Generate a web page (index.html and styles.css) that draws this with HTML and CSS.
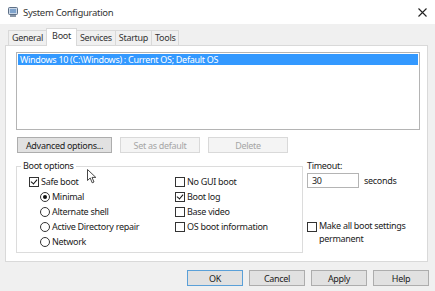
FILE: index.html
```html
<!DOCTYPE html>
<html lang="en">
<head>
    <meta charset="UTF-8">
    <title>System Configuration</title>
    <link rel="stylesheet" href="styles.css">
</head>
<body>
    <div class="window">
        <div class="titlebar">
            <svg class="app-icon" width="10" height="11" viewBox="0 0 10 11">
                <rect x="0.5" y="0.5" width="9" height="7" rx="1" fill="#c9d6e6" stroke="#5d6f86"/>
                <rect x="2" y="2" width="6" height="4" fill="#7fa3cc"/>
                <rect x="2" y="8" width="6" height="2" fill="#8a96a6"/>
            </svg>
            <span class="title">System Configuration</span>
            <svg class="close" width="9" height="9" viewBox="0 0 9 9">
                <path d="M0.5 0.5 L8.5 8.5 M8.5 0.5 L0.5 8.5" stroke="#222" stroke-width="1.1"/>
            </svg>
        </div>

        <div class="tabs">
            <div class="tab">General</div>
            <div class="tab active">Boot</div>
            <div class="tab">Services</div>
            <div class="tab">Startup</div>
            <div class="tab">Tools</div>
        </div>

        <div class="panel">
            <div class="listbox">
                <div class="list-item selected">Windows 10 (C:\Windows) : Current OS; Default OS</div>
            </div>

            <div class="btn-row">
                <button class="btn btn-advanced">Advanced options...</button>
                <button class="btn btn-wide" disabled>Set as default</button>
                <button class="btn btn-wide" disabled>Delete</button>
            </div>

            <div class="options">
                <fieldset class="group">
                    <legend>Boot options</legend>
                    <div class="group-body">
                        <div class="col col-left">
                            <div class="row"><span class="check checked"></span>Safe boot</div>
                            <div class="row sub"><span class="radio selected"></span>Minimal</div>
                            <div class="row sub"><span class="radio"></span>Alternate shell</div>
                            <div class="row sub"><span class="radio"></span>Active Directory repair</div>
                            <div class="row sub"><span class="radio"></span>Network</div>
                        </div>
                        <div class="col">
                            <div class="row"><span class="check"></span>No GUI boot</div>
                            <div class="row"><span class="check checked"></span>Boot log</div>
                            <div class="row"><span class="check"></span>Base video</div>
                            <div class="row"><span class="check"></span>OS boot information</div>
                        </div>
                    </div>
                </fieldset>

                <div class="side">
                    <div class="timeout-label">Timeout:</div>
                    <div class="timeout">
                        <div class="textbox">30</div>
                        <span>seconds</span>
                    </div>
                    <div class="permanent">
                        <span class="check"></span>
                        <div class="permanent-text">
                            <div>Make all boot settings</div>
                            <div>permanent</div>
                        </div>
                    </div>
                </div>
            </div>

            <svg class="cursor" width="11" height="15" viewBox="0 0 11 15">
                <path d="M0.5 0.5 L0.5 11.5 L3.2 9 L5.2 13.8 L7 13 L5 8.4 L8.8 8.4 Z" fill="#fff" stroke="#333" stroke-width="0.9" stroke-linejoin="round"/>
            </svg>
        </div>

        <div class="footer">
            <button class="btn btn-foot default">OK</button>
            <button class="btn btn-foot">Cancel</button>
            <button class="btn btn-foot">Apply</button>
            <button class="btn btn-foot">Help</button>
        </div>
    </div>
</body>
</html>
```

FILE: styles.css
```css
body {
    margin: 0;
    padding: 0;
    background-color: #f0f0f0;
    font-family: "Noto Sans", "Open Sans", sans-serif;
    font-size: 9px;
    letter-spacing: -0.3px;
    color: #222;
}

.window {
    width: 435px;
    height: 291px;
    display: flex;
    flex-direction: column;
    overflow: hidden;
}

.titlebar {
    height: 24px;
    background: white;
    display: flex;
    align-items: center;
    padding: 0 8px;
    flex-shrink: 0;
}

.title {
    margin-left: 5px;
    font-size: 9.5px;
    letter-spacing: -0.3px;
    color: #333;
}

.close {
    margin-left: auto;
}

.tabs {
    display: flex;
    align-items: flex-end;
    height: 21px;
    padding-left: 8px;
    position: relative;
    z-index: 1;
}

.tab {
    height: 15px;
    line-height: 14px;
    padding: 0 3px;
    box-sizing: border-box;
    border: 1px solid #d9d9d9;
    border-bottom: none;
    background: #f0f0f0;
    margin-right: -1px;
    color: #333;
}

.tab.active {
    height: 18px;
    margin-bottom: -1px;
    padding: 0 5px;
    line-height: 13px;
    background: white;
    position: relative;
}

.panel {
    position: relative;
    height: 217px;
    box-sizing: border-box;
    margin: 0 7px 0 5px;
    border: 1px solid #d9d9d9;
    background: white;
    padding: 6px 7px 0 10px;
}

.listbox {
    height: 78px;
    box-sizing: border-box;
    border: 1px solid #b4b4b4;
    padding: 1px;
}

.list-item {
    height: 11px;
    line-height: 11px;
    padding-left: 2px;
    color: white;
}

.list-item.selected {
    background: #3399ff;
}

.btn-row {
    display: flex;
    gap: 8px;
    margin-top: 7px;
    padding-left: 1px;
}

.btn {
    height: 16px;
    box-sizing: border-box;
    padding: 0;
    border: 1px solid #adadad;
    background: #e1e1e1;
    font-family: inherit;
    font-size: 9px;
    letter-spacing: inherit;
    color: #222;
}

.btn:disabled {
    border-color: #d9d9d9;
    background: #f4f4f4;
    color: #a6a6a6;
}

.btn-advanced {
    width: 95px;
}

.btn-wide {
    width: 80px;
}

.options {
    display: flex;
    margin-top: 7px;
}

.group {
    width: 287px;
    height: 93px;
    box-sizing: border-box;
    margin: 0;
    padding: 0;
    border: 1px solid #dcdcdc;
}

.group legend {
    margin-left: 4px;
    padding: 0 2px;
    line-height: 12px;
}

.group-body {
    display: flex;
    padding: 2px 0 0 12px;
}

.col-left {
    width: 146px;
}

.row {
    height: 15px;
    display: flex;
    align-items: center;
    white-space: nowrap;
}

.row.sub {
    padding-left: 11px;
}

.check {
    width: 10px;
    height: 10px;
    box-sizing: border-box;
    border: 1px solid #333;
    background: white;
    margin-right: 2px;
    flex-shrink: 0;
    position: relative;
}

.check.checked::after {
    content: "";
    position: absolute;
    left: 2px;
    top: 0px;
    width: 3px;
    height: 5px;
    border: solid #111;
    border-width: 0 1.5px 1.5px 0;
    transform: rotate(40deg);
}

.radio {
    width: 10px;
    height: 10px;
    box-sizing: border-box;
    border: 1px solid #333;
    border-radius: 50%;
    background: white;
    margin-right: 2px;
    flex-shrink: 0;
    display: flex;
    align-items: center;
    justify-content: center;
}

.radio.selected::after {
    content: "";
    width: 4px;
    height: 4px;
    border-radius: 50%;
    background: #111;
}

.side {
    margin-left: 4px;
}

.timeout-label {
    height: 12px;
    line-height: 12px;
}

.timeout {
    display: flex;
    align-items: center;
    gap: 5px;
    margin-top: 1px;
}

.textbox {
    width: 52px;
    height: 15px;
    box-sizing: border-box;
    border: 1px solid #b4b4b4;
    padding-left: 4px;
    line-height: 13px;
}

.permanent {
    display: flex;
    align-items: flex-start;
    margin-top: 32px;
}

.permanent .check {
    margin-top: 2px;
}

.permanent-text {
    white-space: nowrap;
    line-height: 12.5px;
}

.cursor {
    position: absolute;
    left: 81px;
    top: 123px;
}

.footer {
    display: flex;
    justify-content: flex-end;
    gap: 6px;
    padding-right: 6px;
    margin-top: 8px;
}

.btn-foot {
    width: 56px;
}

.btn-foot.default {
    border-color: #5aa0d8;
}
```
